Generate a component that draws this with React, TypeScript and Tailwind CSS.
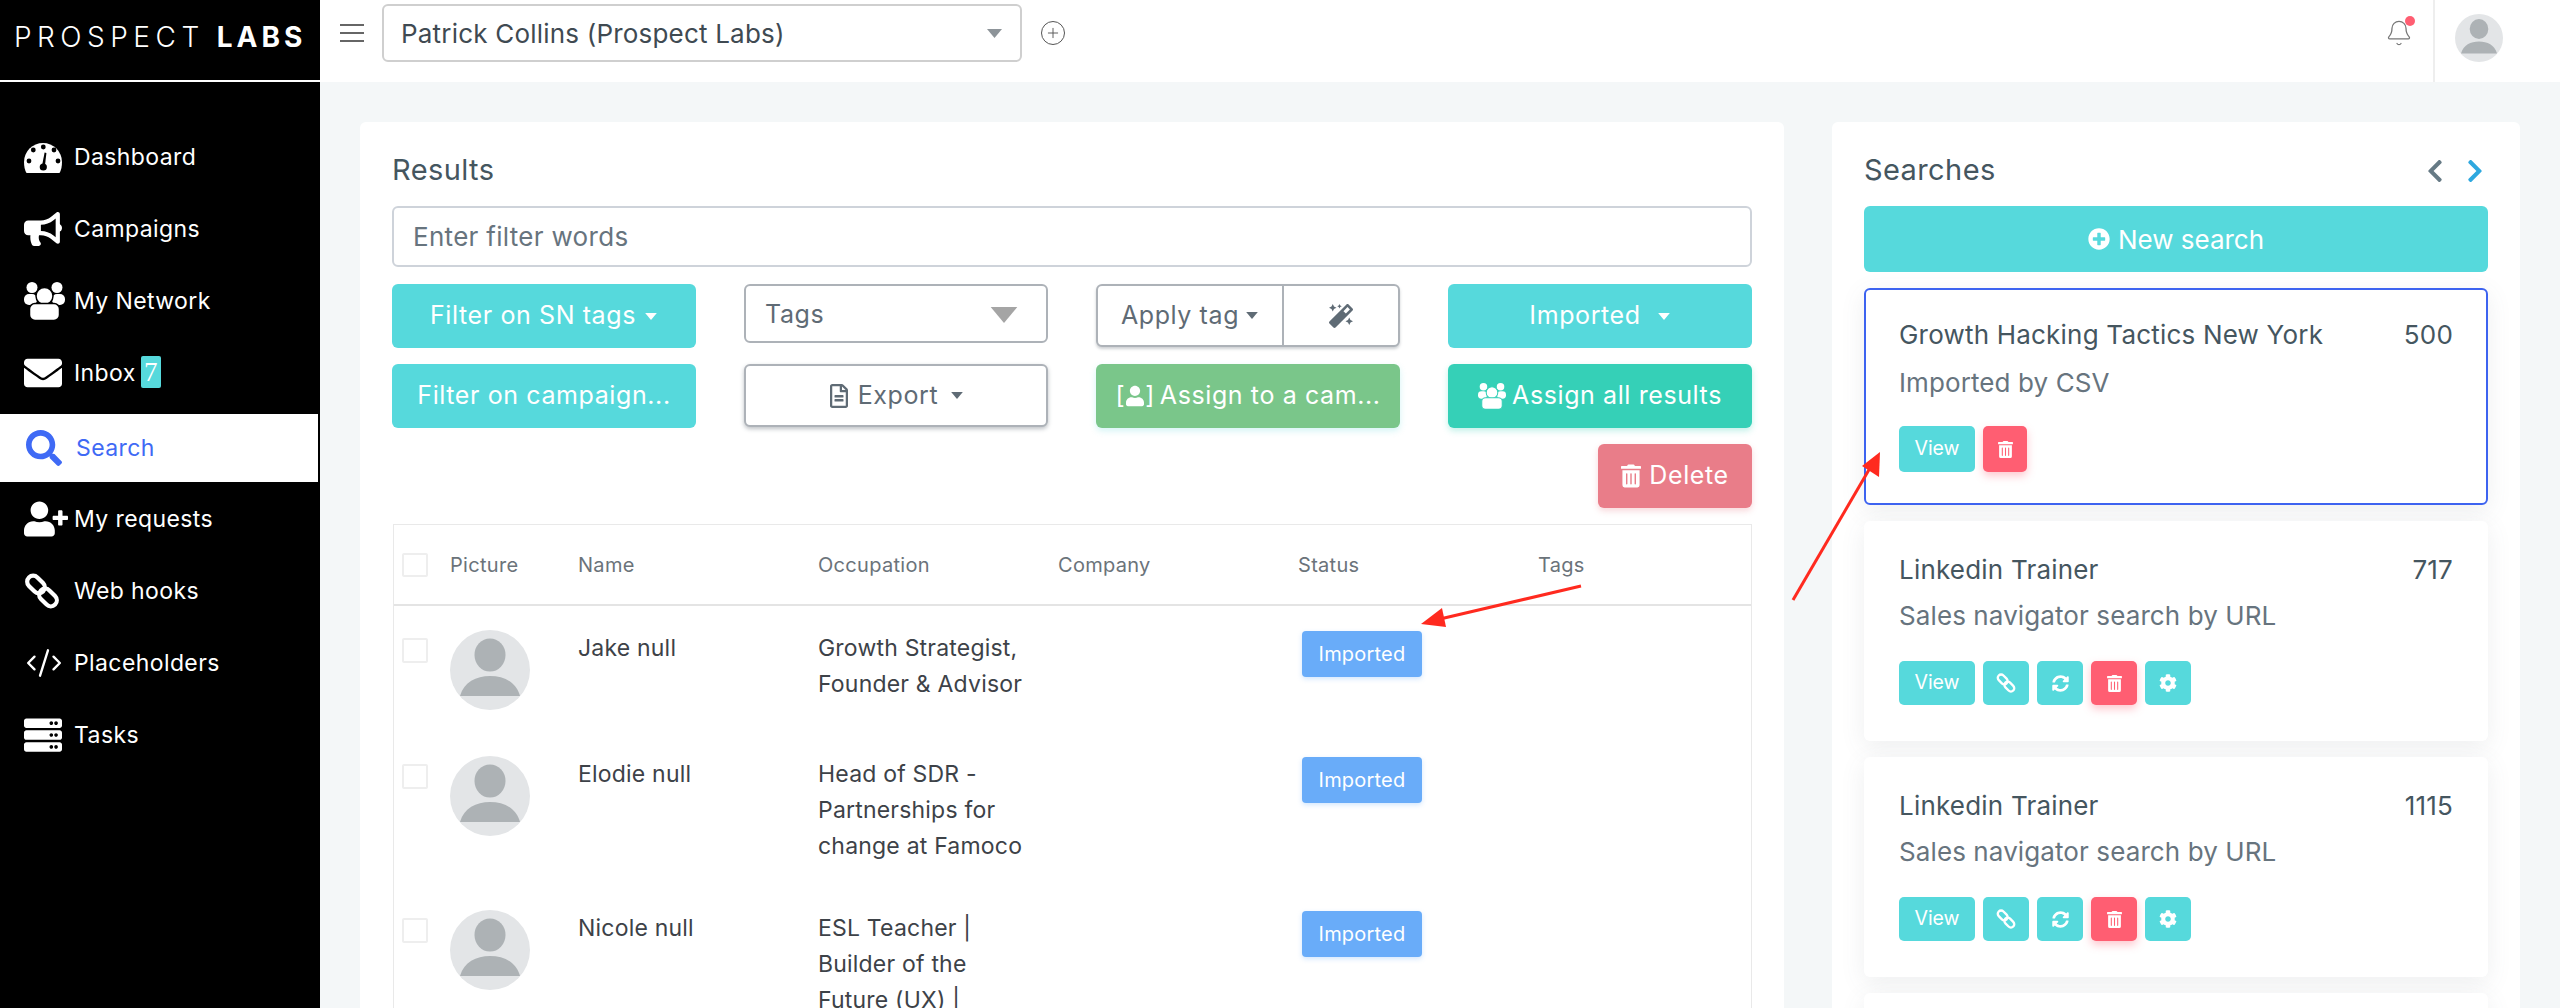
import type { ReactNode } from "react";
import {
  FaBullhorn,
  FaCog,
  FaEnvelope,
  FaMagic,
  FaPlusCircle,
  FaRegFileAlt,
  FaSearch,
  FaServer,
  FaSyncAlt,
  FaTrashAlt,
  FaUserPlus,
  FaUser,
  FaChevronLeft,
  FaChevronRight,
} from "react-icons/fa";
import { Bell, CodeXml, Plus } from "lucide-react";

function GaugeIcon({ className }: { className: string }) {
  return (
    <svg viewBox="0 0 38 31" className={className} fill="currentColor">
      <path d="M2.5 31 Q0 27 0 20 A19 19 0 0 1 38 20 Q38 27 35.5 31 Z" />
      <g fill="black">
        <circle cx="5" cy="19" r="2.4" />
        <circle cx="9.3" cy="8" r="2.4" />
        <circle cx="19.3" cy="5" r="2.4" />
        <circle cx="30" cy="8" r="2.4" />
        <circle cx="34" cy="19" r="2.4" />
        <circle cx="19.3" cy="25" r="3.6" />
        <path d="M17.8 25 L20.6 10.5 L22.4 11 L20.8 25 Z" />
      </g>
    </svg>
  );
}

function UsersIcon({ className, gap = "black" }: { className: string; gap?: string }) {
  return (
    <svg viewBox="0 0 41 38" className={className} fill="currentColor">
      <circle cx="8" cy="5.5" r="5.5" />
      <circle cx="33" cy="5.5" r="5.5" />
      <rect x="0" y="12" width="13" height="11" rx="5" />
      <rect x="28" y="12" width="13" height="11" rx="5" />
      <circle cx="20.5" cy="14" r="8.5" stroke={gap} strokeWidth="1.5" />
      <rect x="5.5" y="21.5" width="30" height="17" rx="5.5" stroke={gap} strokeWidth="1.5" />
    </svg>
  );
}

function ChainIcon({ className }: { className: string }) {
  return (
    <svg viewBox="0 0 36 36" className={className} fill="none" stroke="currentColor" strokeWidth="4.2">
      <rect x="2" y="5.5" width="20" height="12" rx="6" transform="rotate(45 12 11.5)" />
      <rect x="14" y="18.5" width="20" height="12" rx="6" transform="rotate(45 24 24.5)" />
    </svg>
  );
}

const NAV_TOP = [
  { label: "Dashboard", icon: <GaugeIcon className="h-[31px] w-[38px]" /> },
  { label: "Campaigns", icon: <FaBullhorn className="h-[38px] w-[38px]" /> },
  { label: "My Network", icon: <UsersIcon className="h-[38px] w-[41px]" /> },
  { label: "Inbox", icon: <FaEnvelope className="h-[38px] w-[38px]" />, badge: "7" },
];

const NAV_BOTTOM = [
  { label: "My requests", icon: <FaUserPlus className="h-[40px] w-[44px]" /> },
  { label: "Web hooks", icon: <ChainIcon className="h-[36px] w-[36px]" /> },
  { label: "Placeholders", icon: <CodeXml className="h-[38px] w-[40px]" strokeWidth={1.5} /> },
  { label: "Tasks", icon: <FaServer className="h-[38px] w-[38px]" /> },
];

const ROWS = [
  { name: "Jake null", occupation: ["Growth Strategist,", "Founder & Advisor"], height: "h-[126px]" },
  { name: "Elodie null", occupation: ["Head of SDR -", "Partnerships for", "change at Famoco"], height: "h-[154px]" },
  { name: "Nicole null", occupation: ["ESL Teacher |", "Builder of the", "Future (UX) |"], height: "h-[154px]" },
];

function Caret({ className }: { className: string }) {
  return (
    <svg viewBox="0 0 10 6" className={className} fill="currentColor">
      <polygon points="0,0 10,0 5,6" />
    </svg>
  );
}

function Avatar({ className }: { className: string }) {
  return (
    <svg viewBox="0 0 80 80" className={className}>
      <circle cx="40" cy="40" r="40" fill="#e3e5e7" />
      <ellipse cx="40" cy="25" rx="15.5" ry="16.5" fill="#adb2b5" />
      <path d="M10 66 C14 52 26 46 40 46 C54 46 66 52 70 66 Z" fill="#adb2b5" />
    </svg>
  );
}

function Btn({ className, children }: { className: string; children: ReactNode }) {
  return (
    <div className={`flex h-[64px] items-center justify-center gap-2 rounded-[6px] text-[25px] tracking-[0.6px] text-white ${className}`}>
      {children}
    </div>
  );
}

function OutlineBox({ className, children }: { className: string; children: ReactNode }) {
  return (
    <div className={`flex items-center rounded-[6px] border-2 border-[#adb2b8] bg-white text-[25px] tracking-[0.6px] text-[#5f6b75] ${className}`}>
      {children}
    </div>
  );
}

function NavItem({ label, icon, badge }: { label: string; icon: ReactNode; badge?: string }) {
  return (
    <div className="flex h-[72px] items-center text-white">
      <div className="flex w-[74px] justify-start pl-[24px]">{icon}</div>
      <span className="text-[23px] tracking-[0.4px]">{label}</span>
      {badge && (
        <span className="ml-[5px] -mt-[2px] flex h-[32px] w-[20px] items-center justify-center rounded-[2px] bg-[#56d9dc] font-['Liberation_Serif',serif] text-[27px]">
          {badge}
        </span>
      )}
    </div>
  );
}

function TealSquare({ children }: { children: ReactNode }) {
  return <div className="flex h-[44px] w-[46px] items-center justify-center rounded-[5px] bg-[#56d9dc] text-white">{children}</div>;
}

function SearchCard({ title, count, sub, active, full }: { title: string; count: string; sub: string; active?: boolean; full?: boolean }) {
  return (
    <div
      className={`rounded-[6px] bg-white shadow-[0_6px_24px_rgba(90,100,110,0.10)] ${
        active ? "h-[217px] border-2 border-[#3d63f0] px-[33px] pt-[29px]" : "h-[220px] px-[35px] pt-[33px]"
      }`}
    >
      <div className="flex items-center justify-between text-[26px] leading-[32px] tracking-[0.2px] text-[#45565f]">
        <span>{title}</span>
        <span>{count}</span>
      </div>
      <div className={`text-[26px] leading-[32px] tracking-[0.1px] text-[#67747e] ${active ? "mt-[16px]" : "mt-[14px]"}`}>{sub}</div>
      <div className={`flex gap-[8px] ${active ? "mt-[27px]" : "mt-[29px]"}`}>
        <div className={`flex w-[76px] items-center justify-center rounded-[5px] bg-[#56d9dc] text-[19.5px] text-white ${active ? "h-[46px]" : "h-[44px]"}`}>View</div>
        {full && (
          <>
            <TealSquare>
              <ChainIcon className="h-[20px] w-[20px]" />
            </TealSquare>
            <TealSquare>
              <FaSyncAlt className="h-[17px] w-[17px]" />
            </TealSquare>
          </>
        )}
        <div className={`flex items-center justify-center rounded-[5px] bg-[#ff5e72] text-white shadow-[0_4px_8px_rgba(255,94,114,0.35)] ${full ? "h-[44px] w-[46px]" : "h-[46px] w-[44px]"}`}>
          <FaTrashAlt className="h-[17px] w-[15px]" />
        </div>
        {full && (
          <TealSquare>
            <FaCog className="h-[18px] w-[18px]" />
          </TealSquare>
        )}
      </div>
    </div>
  );
}

export default function App() {
  return (
    <div className="relative flex h-[1008px] w-[2560px] overflow-hidden bg-[#f4f7f8] font-['Inter',sans-serif]">
      {/* sidebar */}
      <aside className="h-full w-[320px] shrink-0 bg-black">
        <div className="flex h-[82px] items-start border-b-2 border-white pl-[14px] pt-[18px] text-[28px] leading-[38px] text-white">
          <span className="font-light tracking-[5.5px]">PROSPECT</span>
          <span className="ml-[12px] font-bold tracking-[4px]">LABS</span>
        </div>
        <nav className="pt-[39px]">
          {NAV_TOP.map((item) => (
            <NavItem key={item.label} {...item} />
          ))}
          <div className="mt-[5px] flex h-[68px] w-[318px] items-center bg-white text-[#3f6af5]">
            <div className="w-[76px] pl-[26px]">
              <FaSearch className="h-[36px] w-[36px]" />
            </div>
            <span className="text-[23px] tracking-[0.4px]">Search</span>
          </div>
          <div className="mt-[1px]">
            {NAV_BOTTOM.map((item) => (
              <NavItem key={item.label} {...item} />
            ))}
          </div>
        </nav>
      </aside>

      <div className="flex min-w-0 flex-1 flex-col">
        {/* header */}
        <header className="flex h-[82px] shrink-0 items-center bg-white">
          <div className="ml-[20px] flex w-[24px] flex-col gap-[6px] -mt-[16px]">
            <span className="h-[2px] bg-[#666]" />
            <span className="h-[2px] bg-[#666]" />
            <span className="h-[2px] bg-[#666]" />
          </div>
          <div className="ml-[18px] -mt-[16px] flex h-[58px] w-[640px] items-center justify-between rounded-[6px] border-2 border-[#cfcfcf] pl-[17px] pr-[18px] text-[26px] tracking-[0.2px] text-[#3f4a52]">
            <span>Patrick Collins (Prospect Labs)</span>
            <Caret className="h-[9px] w-[15px] text-[#8d9499]" />
          </div>
          <div className="ml-[19px] -mt-[16px] flex h-[24px] w-[24px] items-center justify-center rounded-full border border-[#555] text-[#555]">
            <Plus className="h-[16px] w-[16px]" strokeWidth={1.4} />
          </div>
          <div className="ml-auto flex h-full items-center">
            <div className="relative mr-[20px] -mt-[16px]">
              <Bell className="h-[28px] w-[28px] text-[#777]" strokeWidth={1.1} />
              <span className="absolute -right-[2px] -top-[3px] h-[10px] w-[10px] rounded-full bg-[#ff5e72]" />
            </div>
            <div className="flex h-full w-[127px] border-l-2 border-[#eeeeee] pl-[20px] pt-[14px]">
              <Avatar className="h-[48px] w-[48px]" />
            </div>
          </div>
        </header>

        {/* content */}
        <main className="flex flex-1 gap-[48px] overflow-hidden pl-[40px] pr-[40px] pt-[40px]">
          <section className="h-[1000px] w-[1424px] shrink-0 rounded-[6px] bg-white px-[32px] pt-[28px]">
            <h2 className="text-[29px] leading-[40px] tracking-[0.4px] text-[#45565f]">Results</h2>
            <div className="mt-[16px] flex h-[61px] items-center rounded-[6px] border-2 border-[#ced3da] pl-[19px] text-[26px] tracking-[0.3px] text-[#67747e]">
              Enter filter words
            </div>

            <div className="mt-[17px] grid grid-cols-[304px_304px_304px_304px] gap-x-[48px] gap-y-[16px]">
              <Btn className="bg-[#56d9dc]">
                Filter on SN tags
                <Caret className="h-[7px] w-[14px] text-white" />
              </Btn>
              <OutlineBox className="h-[59px] justify-between pl-[19px] pr-[26px] pt-[2px]">
                Tags
                <Caret className="h-[16px] w-[32px] text-[#a5a5a5]" />
              </OutlineBox>
              <OutlineBox className="h-[63px] shadow-[0_2px_3px_rgba(90,100,110,0.3)]">
                <div className="flex h-full w-[186px] items-center justify-center gap-[6px] border-r-2 border-[#adb2b8]">
                  Apply tag
                  <Caret className="h-[7px] w-[14px] text-[#5f6b75]" />
                </div>
                <div className="flex flex-1 justify-center">
                  <FaMagic className="h-[24px] w-[24px] text-[#5f6b75]" />
                </div>
              </OutlineBox>
              <Btn className="bg-[#56d9dc]">
                Imported
                <Caret className="ml-2 h-[7px] w-[14px] text-white" />
              </Btn>

              <Btn className="bg-[#56d9dc]">Filter on campaign...</Btn>
              <OutlineBox className="h-[63px] justify-center gap-[8px] shadow-[0_2px_4px_rgba(90,100,110,0.4)]">
                <FaRegFileAlt className="h-[24px] w-[22px]" />
                Export
                <Caret className="ml-1 h-[7px] w-[14px] text-[#5f6b75]" />
              </OutlineBox>
              <Btn className="gap-[5px] bg-[#7ac68a] shadow-[0_3px_6px_rgba(86,217,220,0.25)]">
                <span className="flex items-center gap-[1px]">
                  [<FaUser className="h-[24px] w-[18px]" />]
                </span>
                Assign to a cam...
              </Btn>
              <Btn className="gap-[6px] bg-[#35d0b7] shadow-[0_3px_6px_rgba(53,208,183,0.3)]">
                <UsersIcon className="h-[26px] w-[28px]" gap="#35d0b7" />
                Assign all results
              </Btn>
            </div>

            <div className="mt-[16px] flex justify-end">
              <Btn className="w-[154px] bg-[#e97d89] shadow-[0_3px_6px_rgba(233,125,137,0.3)]">
                <FaTrashAlt className="h-[24px] w-[20px]" />
                Delete
              </Btn>
            </div>

            {/* table */}
            <div className="ml-[1px] mt-[16px] border border-b-0 border-[#e9e9e9]">
              <div className="grid h-[81px] grid-cols-[56px_128px_240px_240px_240px_240px_1fr] items-center border-b-2 border-[#e4e4e4] text-[20px] tracking-[0.3px] text-[#6b737a]">
                <div className="pl-[8px]">
                  <div className="h-[24px] w-[26px] rounded-[2px] border-2 border-[#eeeeee]" />
                </div>
                <div>Picture</div>
                <div>Name</div>
                <div>Occupation</div>
                <div>Company</div>
                <div>Status</div>
                <div>Tags</div>
              </div>
              {ROWS.map((row) => (
                <div key={row.name} className={`grid grid-cols-[56px_128px_240px_240px_240px_240px_1fr] pt-[24px] text-[23px] leading-[36px] tracking-[0.2px] text-[#3d4248] ${row.height}`}>
                  <div className="pl-[8px] pt-[8px]">
                    <div className="h-[25px] w-[26px] rounded-[2px] border-2 border-[#eeeeee]" />
                  </div>
                  <Avatar className="h-[80px] w-[80px]" />
                  <div>{row.name}</div>
                  <div>
                    {row.occupation.map((line) => (
                      <div key={line}>{line}</div>
                    ))}
                  </div>
                  <div />
                  <div className="pl-[4px] pt-[1px]">
                    <div className="flex h-[46px] w-[120px] items-center justify-center rounded-[4px] bg-[#69acf9] text-[20px] text-white shadow-[0_2px_5px_rgba(105,172,249,0.3)]">
                      Imported
                    </div>
                  </div>
                  <div />
                </div>
              ))}
            </div>
          </section>

          <section className="h-[1000px] w-[688px] shrink-0 rounded-[6px] bg-white px-[32px] pt-[28px]">
            <div className="flex items-center justify-between">
              <h2 className="text-[29px] leading-[40px] tracking-[0.4px] text-[#45565f]">Searches</h2>
              <div className="flex items-center gap-[14px] pr-[0px] pt-[2px]">
                <FaChevronLeft className="h-[26px] w-[26px] text-[#667a85]" />
                <FaChevronRight className="h-[26px] w-[26px] text-[#2ea8df]" />
              </div>
            </div>
            <div className="mt-[16px] flex h-[66px] items-center justify-center gap-[8px] rounded-[6px] bg-[#56d9dc] text-[26px] text-white">
              <FaPlusCircle className="h-[22px] w-[22px]" />
              New search
            </div>
            <div className="mt-[16px] flex flex-col gap-[16px]">
              <SearchCard active title="Growth Hacking Tactics New York" count="500" sub="Imported by CSV" />
              <SearchCard full title="Linkedin Trainer" count="717" sub="Sales navigator search by URL" />
              <SearchCard full title="Linkedin Trainer" count="1115" sub="Sales navigator search by URL" />
              <div className="h-[220px] rounded-[6px] bg-white shadow-[0_6px_24px_rgba(90,100,110,0.10)]" />
            </div>
          </section>
        </main>
      </div>

      {/* red annotation arrows drawn over the screenshot */}
      <svg className="pointer-events-none absolute left-0 top-0 h-[1008px] w-[2560px]" viewBox="0 0 2560 1008">
        <line x1="1581" y1="586" x2="1440" y2="619" stroke="#ff2a1f" strokeWidth="3" />
        <polygon points="1421,624 1442,608 1446,627" fill="#ff2a1f" />
        <line x1="1793" y1="600" x2="1870" y2="468" stroke="#ff2a1f" strokeWidth="3" />
        <polygon points="1880,452 1879,477 1862,466" fill="#ff2a1f" />
      </svg>
    </div>
  );
}
